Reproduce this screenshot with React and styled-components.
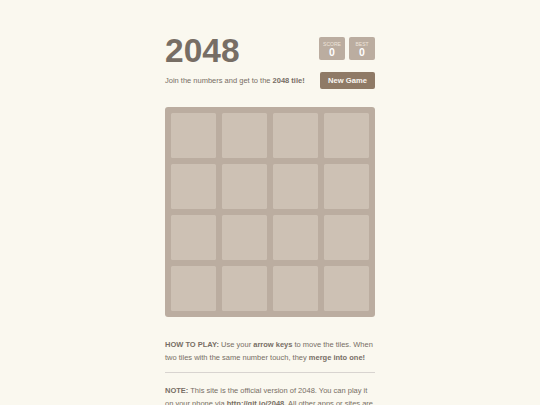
import React from 'react';
import styled, { createGlobalStyle } from 'styled-components';

const GlobalStyle = createGlobalStyle`
  html, body {
    margin: 0;
    padding: 0;
    background: #faf8ef;
    color: #776e65;
    font-family: "Liberation Sans", Arial, sans-serif;
    font-size: 7.5px;
  }
`;

const Container = styled.div`
  width: 210px;
  margin: 0 auto;
  padding-top: 33px;
`;

const Heading = styled.div`
  display: flex;
  justify-content: space-between;
  align-items: flex-start;
`;

const Title = styled.h1`
  margin: 0;
  font-size: 33.5px;
  line-height: 36px;
  font-weight: bold;
  color: #776e65;
`;

const Scores = styled.div`
  display: flex;
  gap: 4px;
  margin-top: 4px;
`;

const ScoreBox = styled.div`
  width: 26px;
  height: 23px;
  box-sizing: border-box;
  background: #bbada0;
  border-radius: 2px;
  display: flex;
  flex-direction: column;
  align-items: center;
  padding-top: 4px;
  color: #fff;
`;

const ScoreLabel = styled.div`
  font-size: 5px;
  line-height: 6px;
  color: #eee4da;
  text-transform: uppercase;
`;

const ScoreValue = styled.div`
  font-size: 10.5px;
  line-height: 11px;
  font-weight: bold;
`;

const AboveGame = styled.div`
  display: flex;
  justify-content: space-between;
  align-items: center;
  margin-top: 3px;
`;

const Intro = styled.p`
  margin: 0;
  line-height: 12px;
`;

const NewGame = styled.button`
  width: 55px;
  height: 17px;
  border: none;
  border-radius: 2px;
  background: #8f7a66;
  color: #f9f6f2;
  font-family: inherit;
  font-size: 7.6px;
  font-weight: bold;
  padding: 0;
  cursor: pointer;
`;

const Board = styled.div`
  margin-top: 18px;
  width: 210px;
  height: 210px;
  box-sizing: border-box;
  padding: 6px;
  background: #bbada0;
  border-radius: 3px;
  display: grid;
  grid-template-columns: repeat(4, 1fr);
  grid-template-rows: repeat(4, 1fr);
  gap: 6px;
`;

const Cell = styled.div`
  background: #cdc1b4;
  border-radius: 1.5px;
`;

const Explanation = styled.p`
  margin: 21px 0 0;
  line-height: 13px;
`;

const Rule = styled.hr`
  border: none;
  border-bottom: 1px solid #d8d4d0;
  margin: 8px 0 0;
`;

const Note = styled.p`
  margin: 11px 0 0;
  line-height: 13px;
`;

export default function App() {
  const cells = Array.from({ length: 16 });
  return (
    <>
      <GlobalStyle />
      <Container>
        <Heading>
          <Title>2048</Title>
          <Scores>
            <ScoreBox>
              <ScoreLabel>Score</ScoreLabel>
              <ScoreValue>0</ScoreValue>
            </ScoreBox>
            <ScoreBox>
              <ScoreLabel>Best</ScoreLabel>
              <ScoreValue>0</ScoreValue>
            </ScoreBox>
          </Scores>
        </Heading>
        <AboveGame>
          <Intro>
            Join the numbers and get to the <b>2048 tile!</b>
          </Intro>
          <NewGame>New Game</NewGame>
        </AboveGame>
        <Board>
          {cells.map((_, i) => (
            <Cell key={i} />
          ))}
        </Board>
        <Explanation>
          <b>HOW TO PLAY:</b> Use your <b>arrow keys</b> to move the tiles. When two tiles with the
          same number touch, they <b>merge into one!</b>
        </Explanation>
        <Rule />
        <Note>
          <b>NOTE:</b> This site is the official version of 2048. You can play it on your phone via{' '}
          <b>http://git.io/2048.</b> All other apps or sites are derivatives or fakes, and should be
          used with caution.
        </Note>
      </Container>
    </>
  );
}
